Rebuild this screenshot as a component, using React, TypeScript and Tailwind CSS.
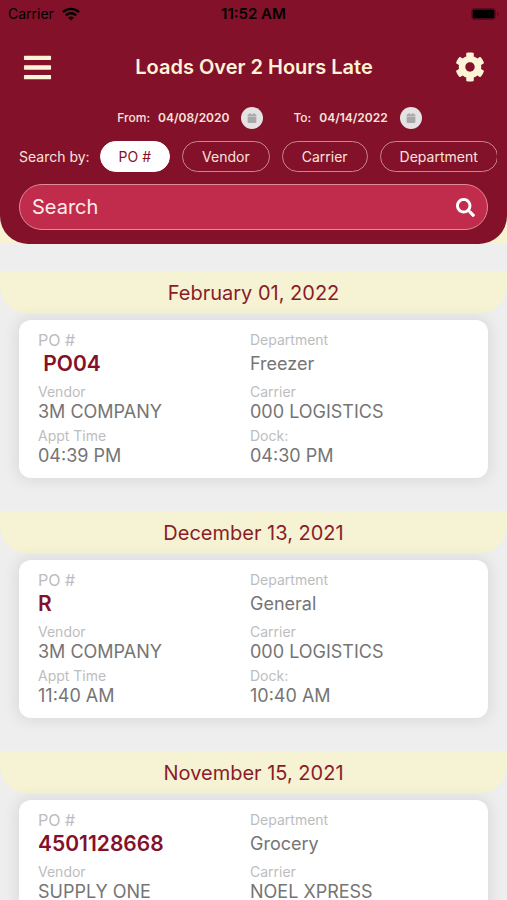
import { useState } from 'react'
import { FaBars, FaCalendar, FaCog, FaSearch } from 'react-icons/fa'

const FILTERS = ['PO #', 'Vendor', 'Carrier', 'Department']

const LOADS = [
  {
    date: 'February 01, 2022',
    po: ' PO04',
    department: 'Freezer',
    vendor: '3M COMPANY',
    carrier: '000 LOGISTICS',
    appt: '04:39 PM',
    dock: '04:30 PM',
  },
  {
    date: 'December 13, 2021',
    po: 'R',
    department: 'General',
    vendor: '3M COMPANY',
    carrier: '000 LOGISTICS',
    appt: '11:40 AM',
    dock: '10:40 AM',
  },
  {
    date: 'November 15, 2021',
    po: '4501128668',
    department: 'Grocery',
    vendor: 'SUPPLY ONE',
    carrier: 'NOEL XPRESS',
  },
]

type Load = (typeof LOADS)[number]

function StatusBar() {
  return (
    <div className="grid h-7 grid-cols-3 items-center px-2 text-sm text-black">
      <div className="flex items-center gap-2">
        <span>Carrier</span>
        <svg width="18" height="14" viewBox="0 0 18 14" fill="none" stroke="currentColor" strokeWidth="2.4">
          <path d="M1 5.2a11.4 11.4 0 0 1 16 0" />
          <path d="M3.9 8.4a7.2 7.2 0 0 1 10.2 0" />
          <path d="M9 13.6 6.2 10.8a4 4 0 0 1 5.600 0z" fill="currentColor" stroke="none" />
        </svg>
      </div>
      <span className="text-center text-[15px] font-semibold">11:52 AM</span>
      <svg className="justify-self-end" width="28" height="12" viewBox="0 0 28 12">
        <rect x="0.5" y="0.5" width="24" height="11" rx="3" fill="none" stroke="#5c0a1d" />
        <rect x="1.500" y="1.500" width="22" height="9" rx="1.500" fill="#000" />
        <path d="M26 4v4c1-.4 1.600-1.100 1.600-2S27 4.400 26 4z" fill="#5c0a1d" />
      </svg>
    </div>
  )
}

function DateField({ label, value }: { label: string; value: string }) {
  return (
    <div className="flex items-center gap-3 text-xs">
      <div className="flex gap-2">
        <span className="font-medium">{label}</span>
        <span className="font-semibold">{value}</span>
      </div>
      <button
        type="button"
        aria-label={`${label} ${value}`}
        className="flex size-[22px] items-center justify-center rounded-full bg-[#e4e2e2] text-[#a9a7a7]"
      >
        <FaCalendar size={10} />
      </button>
    </div>
  )
}

function Header() {
  const [filter, setFilter] = useState('PO #')

  return (
    <header className="shrink-0 bg-[#f7f2d2]">
      <div className="rounded-b-[28px] bg-[#83112a] pb-[14px] text-[#fbe3dc]">
        <StatusBar />

        <div className="flex h-[78px] items-center justify-between px-[22px] text-[#fdf3d7]">
          <button type="button" aria-label="Menu">
            <FaBars size={31} />
          </button>
          <h1 className="text-xl font-semibold">Loads Over 2 Hours Late</h1>
          <button type="button" aria-label="Settings">
            <FaCog size={30} />
          </button>
        </div>

        <div className="flex justify-center gap-[30px] pt-px pl-8">
          <DateField label="From:" value="04/08/2020" />
          <DateField label="To:" value="04/14/2022" />
        </div>

        <div className="mt-3 mr-[10px] ml-[19px] flex items-center gap-[10px] text-sm">
          <span className="shrink-0">Search by:</span>
          <div className="flex gap-3 overflow-hidden">
            {FILTERS.map((name) => (
              <button
                key={name}
                type="button"
                onClick={() => setFilter(name)}
                className={
                  name === filter
                    ? 'h-[31px] shrink-0 rounded-full border border-white bg-white px-[18px] text-[#83112a]'
                    : 'h-[31px] shrink-0 rounded-full border border-[#c98590] px-[19px]'
                }
              >
                {name}
              </button>
            ))}
          </div>
        </div>

        <label className="mx-[19px] mt-3 flex h-[46px] items-center rounded-full border border-[#e08a9a] bg-[#c12b4c] px-3">
          <input
            type="text"
            placeholder="Search"
            aria-label="Search"
            className="min-w-0 flex-1 bg-transparent text-xl outline-none placeholder:text-[#fdebe9]"
          />
          <FaSearch size={19} className="text-white" />
        </label>
      </div>
    </header>
  )
}

function Field({ label, value }: { label: string; value: string }) {
  return (
    <div>
      <dt className="text-sm leading-[18px] text-[#bdbdbd]">{label}</dt>
      <dd className="text-lg leading-[22px]">{value}</dd>
    </div>
  )
}

function LoadCard({ load }: { load: Load }) {
  return (
    <section className="mb-[33px]">
      <h2 className="flex h-[43px] items-center justify-center rounded-b-[28px] bg-[#f6f2d4] text-xl text-[#8a1c28]">
        {load.date}
      </h2>
      <dl className="mx-[19px] mt-1.5 grid grid-cols-[212px_1fr] gap-y-1 rounded-xl bg-white px-[19px] py-[11px] text-[#757575] shadow-[0_0_14px_4px_rgba(0,0,0,0.07)]">
        <div>
          <dt className="text-base leading-[18px] text-[#bdbdbd]">PO #</dt>
          <dd className="text-[21px] leading-[30px] font-semibold whitespace-pre text-[#83112a]">{load.po}</dd>
        </div>
        <div>
          <dt className="text-sm leading-[18px] text-[#bdbdbd]">Department</dt>
          <dd className="text-lg leading-[30px]">{load.department}</dd>
        </div>
        <Field label="Vendor" value={load.vendor} />
        <Field label="Carrier" value={load.carrier} />
        {load.appt && <Field label="Appt Time" value={load.appt} />}
        {load.dock && <Field label="Dock:" value={load.dock} />}
      </dl>
    </section>
  )
}

export default function App() {
  return (
    <div className="flex h-screen flex-col bg-[#eeeeef] font-['Inter',sans-serif]">
      <Header />
      <main className="min-h-0 flex-1 overflow-y-auto pt-[27px] [scrollbar-width:none]">
        {LOADS.map((load) => (
          <LoadCard key={load.date} load={load} />
        ))}
      </main>
    </div>
  )
}
